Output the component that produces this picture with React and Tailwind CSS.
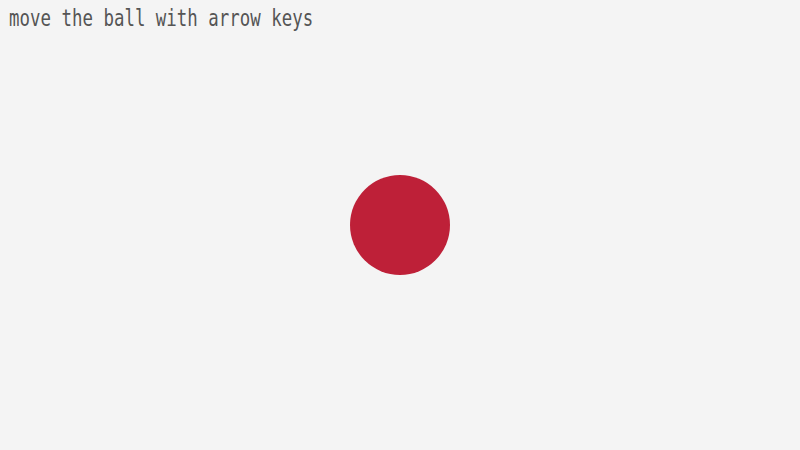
import React, { useEffect, useState } from 'react'

const App = () => {
  const [pos, setPos] = useState({ x: 400, y: 225 });

  useEffect(() => {
    const onKey = (e) => {
      const step = 10;
      if (e.key === "ArrowLeft") setPos((p) => ({ ...p, x: p.x - step }));
      if (e.key === "ArrowRight") setPos((p) => ({ ...p, x: p.x + step }));
      if (e.key === "ArrowUp") setPos((p) => ({ ...p, y: p.y - step }));
      if (e.key === "ArrowDown") setPos((p) => ({ ...p, y: p.y + step }));
    };
    window.addEventListener("keydown", onKey);
    return () => window.removeEventListener("keydown", onKey);
  }, []);

  return (
    <div className="relative w-full h-screen overflow-hidden bg-[#f4f4f4]">
      <p className="pl-[9px] pt-[2px] text-[17.4px] leading-[24px] text-[#555555] font-['DejaVu_Sans_Mono',monospace] tracking-[0.02px] scale-y-[1.3] origin-top-left">
        move the ball with arrow keys
      </p>
      <div
        className="absolute w-[100px] h-[100px] -ml-[50px] -mt-[50px] rounded-full bg-[#be2038]"
        style={{ left: pos.x, top: pos.y }}
      />
    </div>
  )
}

export default App
